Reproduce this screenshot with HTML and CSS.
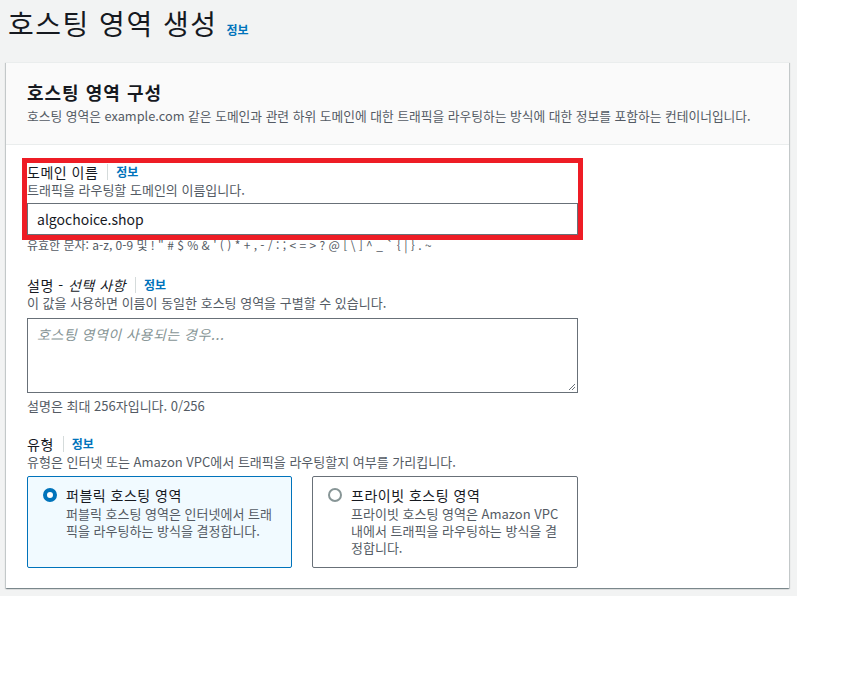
FILE: index.html
```html
<!DOCTYPE html>
<html lang="ko">
<head>
<meta charset="utf-8">
<title>호스팅 영역 생성</title>
<link rel="stylesheet" href="styles.css">
</head>
<body>
<div class="page">
  <div class="title-row">
    <h1 class="page-title">호스팅 영역 생성</h1>
    <a class="info info-title">정보</a>
  </div>
  <section class="card">
    <header class="card-header">
      <h2 class="card-title">호스팅 영역 구성</h2>
      <p class="card-desc">호스팅 영역은 example.com 같은 도메인과 관련 하위 도메인에 대한 트래픽을 라우팅하는 방식에 대한 정보를 포함하는 컨테이너입니다.</p>
    </header>
    <div class="card-body">
      <div class="field field-domain">
        <div class="label-row"><span class="label">도메인 이름</span><a class="info info-label">정보</a></div>
        <div class="desc">트래픽을 라우팅할 도메인의 이름입니다.</div>
        <div class="input">algochoice.shop</div>
        <div class="constraint">유효한 문자: a-z, 0-9 및 ! " # $ % &amp; ' ( ) * + , - / : ; &lt; = &gt; ? @ [ \ ] ^ _ ` { | } . ~</div>
        <div class="highlight"></div>
      </div>
      <div class="field field-desc">
        <div class="label-row"><span class="label">설명 -&nbsp;<i class="optional">선택 사항</i></span><a class="info info-label">정보</a></div>
        <div class="desc">이 값을 사용하면 이름이 동일한 호스팅 영역을 구별할 수 있습니다.</div>
        <div class="textarea"><span class="placeholder">호스팅 영역이 사용되는 경우...</span>
          <svg class="grip" width="8" height="8" viewBox="0 0 8 8"><path d="M7 1L1 7M7 4L4 7" stroke="#687078" stroke-width="1" fill="none"/></svg>
        </div>
        <div class="constraint counter">설명은 최대 256자입니다. 0/256</div>
      </div>
      <div class="field field-type">
        <div class="label-row"><span class="label">유형</span><a class="info info-label">정보</a></div>
        <div class="desc">유형은 인터넷 또는 Amazon VPC에서 트래픽을 라우팅할지 여부를 가리킵니다.</div>
        <div class="tiles">
          <div class="tile tile-selected">
            <span class="radio radio-on"></span>
            <div class="tile-text">
              <div class="tile-title">퍼블릭 호스팅 영역</div>
              <div class="tile-desc">퍼블릭 호스팅 영역은 인터넷에서 트래픽을 라우팅하는 방식을 결정합니다.</div>
            </div>
          </div>
          <div class="tile">
            <span class="radio"></span>
            <div class="tile-text">
              <div class="tile-title">프라이빗 호스팅 영역</div>
              <div class="tile-desc">프라이빗 호스팅 영역은 Amazon VPC 내에서 트래픽을 라우팅하는 방식을 결정합니다.</div>
            </div>
          </div>
        </div>
      </div>
    </div>
  </section>
</div>
</body>
</html>
```
FILE: styles.css
```css
* { box-sizing: border-box; }
body {
  margin: 0;
  background: #ffffff;
  font-family: "Noto Sans CJK KR", "Noto Sans", sans-serif;
  color: #16191f;
}
.page {
  width: 797px;
  height: 596px;
  background: #f2f3f3;
  padding-top: 5px;
}
.title-row {
  display: flex;
  align-items: baseline;
  padding-left: 8px;
  height: 35px;
}
.page-title {
  margin: 0;
  font-size: 28px;
  line-height: 36px;
  font-weight: 400;
  letter-spacing: 1.5px;
  color: #16191f;
}
.info {
  color: #0073bb;
  font-weight: 700;
  font-size: 12px;
  text-decoration: none;
}
.info-title {
  margin-left: 9px;
}
.card {
  margin-top: 22px;
  margin-left: 6px;
  width: 783px;
  background: #ffffff;
  border-top: 1px solid #eaeded;
  box-shadow: 0 1px 1px 0 rgba(0, 28, 36, 0.3), 1px 1px 1px 0 rgba(0, 28, 36, 0.15), -1px 1px 1px 0 rgba(0, 28, 36, 0.15);
}
.card-header {
  background: #fafafa;
  border-bottom: 1px solid #eaeded;
  padding: 17px 21px 19px;
}
.card-title {
  margin: 0;
  font-size: 18px;
  line-height: 24px;
  font-weight: 700;
  letter-spacing: 1px;
}
.card-desc {
  margin: 3px 0 0;
  font-size: 12.75px;
  line-height: 18px;
  color: #545b64;
}
.card-body {
  padding: 17px 21px 20px;
}
.field {
  position: relative;
  width: 551px;
}
.field-desc { margin-top: 22px; }
.field-type { margin-top: 20px; }
.label-row {
  display: flex;
  align-items: center;
  height: 20px;
}
.label {
  display: flex;
  align-items: baseline;
  font-size: 14px;
  line-height: 20px;
  letter-spacing: 0.5px;
}
.optional {
  display: inline-block;
}
.info-label {
  margin-left: 9px;
  padding-left: 8px;
  border-left: 1px solid #d5dbdb;
  line-height: 16px;
}
.desc {
  font-size: 13px;
  line-height: 16px;
  color: #545b64;
}
.input {
  margin-top: 5px;
  height: 32px;
  border: 1px solid #687078;
  padding: 0 9px;
  font-size: 14px;
  line-height: 30px;
  color: #16191f;
}
.constraint {
  margin-top: 2px;
  font-size: 12px;
  line-height: 16px;
  color: #545b64;
}
.counter {
  margin-top: 5px;
  font-size: 13px;
}
.highlight {
  position: absolute;
  left: -5px;
  top: -4px;
  width: 561px;
  height: 82px;
  border: 5px solid #ee1c25;
  pointer-events: none;
}
.textarea {
  position: relative;
  margin-top: 7px;
  height: 75px;
  border: 1px solid #687078;
  padding: 4px 9px;
  font-size: 14px;
  line-height: 22px;
}
.placeholder {
  color: #879596;
  font-style: italic;
  letter-spacing: 0.5px;
}
.grip {
  position: absolute;
  right: 1px;
  bottom: 1px;
}
.tiles {
  margin-top: 6px;
  display: grid;
  grid-template-columns: 265px 266px;
  column-gap: 20px;
}
.tile {
  display: flex;
  align-items: flex-start;
  height: 92px;
  border: 1px solid #687078;
  border-radius: 2px;
  padding: 8px 16px 0 15px;
}
.tile-selected {
  border-color: #0073bb;
  background: #f1faff;
}
.radio {
  flex: none;
  width: 14px;
  height: 14px;
  margin-top: 3px;
  border-radius: 50%;
  border: 2px solid #879596;
  background: #ffffff;
}
.radio-on {
  border: 4px solid #0073bb;
}
.tile-text {
  margin-left: 9px;
}
.tile-title {
  font-size: 14px;
  line-height: 20px;
  letter-spacing: 0.5px;
}
.tile-desc {
  font-size: 13px;
  line-height: 17px;
  color: #545b64;
}
```
